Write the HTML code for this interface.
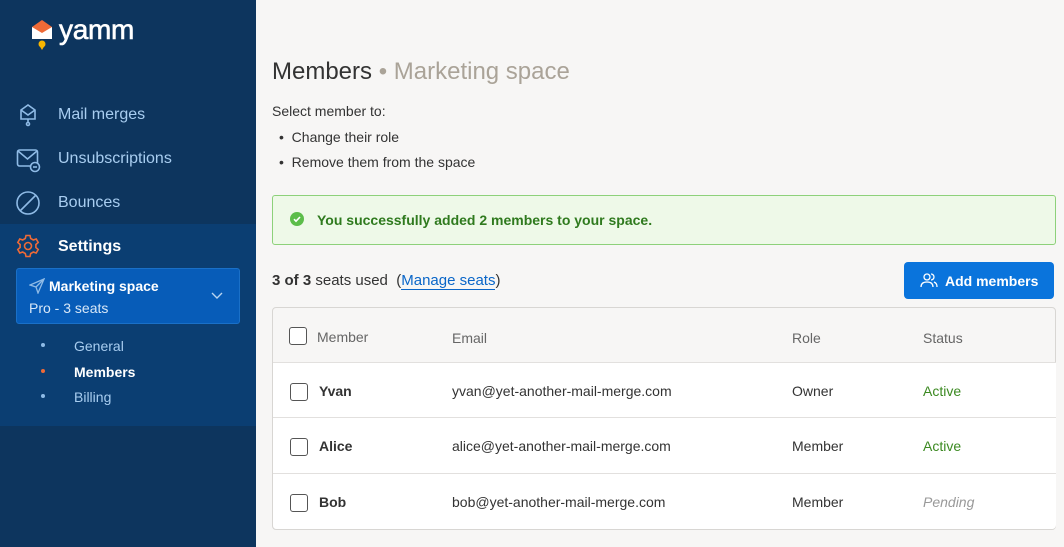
<!DOCTYPE html>
<html><head><style>
*{box-sizing:border-box;margin:0;padding:0}
body{width:1064px;height:547px;overflow:hidden;font-family:"Liberation Sans",sans-serif;background:#f7f6f5;position:relative}
.sb{position:absolute;left:0;top:0;width:256px;height:547px;background:#0d355e}
.sel{position:absolute;left:0;top:224px;width:256px;height:202px;background:#0b3e72}
.nav{position:absolute;left:58px;font-size:16px;color:#a8cdf0}
.ic{position:absolute;left:16px}
.t{position:absolute;font-size:14px;color:#333}
.row{position:absolute;left:273px;width:783px;height:56px;background:#fff;border-top:1px solid #e2e0de}
.cb{position:absolute;width:18px;height:18px;border:1.5px solid #555;border-radius:3px;background:#fff}
.row span{position:absolute;top:20px;font-size:14px;color:#333}
</style></head><body>
<div class="sb"></div>
<div class="sel"></div>
<svg style="position:absolute;left:31px;top:19px" width="22" height="32" viewBox="0 0 22 32"><path d="M1 8 L11 1 L21 8 Z" fill="#ee6a37"/><rect x="1" y="8" width="20" height="12" fill="#fff"/><path d="M1 8 L11 14 L21 8" fill="#ee6a37"/><circle cx="11" cy="25" r="3.5" fill="#f7b500"/><path d="M8 26 L11 31 L14 26Z" fill="#f7b500"/></svg>
<div style="position:absolute;left:59px;top:14px;font-size:28px;color:#fff;letter-spacing:-0.3px;-webkit-text-stroke:0.6px #fff">yamm</div>
<svg class="ic" style="top:102px" width="26" height="26" viewBox="0 0 26 26" fill="none" stroke="#8fbbe6" stroke-width="1.6"><path d="M5 8 L12 3 L19 8 V17 H5 Z"/><path d="M5 8 L12 13 L19 8"/><path d="M12 17v3"/><circle cx="12" cy="22" r="1.5"/></svg>
<div class="nav" style="top:106px">Mail merges</div>
<svg class="ic" style="top:147px" width="26" height="26" viewBox="0 0 26 26" fill="none" stroke="#8fbbe6" stroke-width="1.6"><rect x="1.5" y="3" width="20" height="16" rx="2"/><path d="M2 4 L11.5 12 L21 4"/><circle cx="19" cy="20" r="4.5" fill="#0d355e"/><path d="M17 20h4"/></svg>
<div class="nav" style="top:150px">Unsubscriptions</div>
<svg class="ic" style="top:191px" width="26" height="26" viewBox="0 0 26 26" fill="none" stroke="#8fbbe6" stroke-width="1.6"><circle cx="12" cy="12" r="11"/><path d="M4.5 19.5 L19.5 4.5"/></svg>
<div class="nav" style="top:194px">Bounces</div>
<svg class="ic" style="top:234px" width="24" height="24" viewBox="0 0 24 24" fill="none" stroke="#ee6a37" stroke-width="1.6"><circle cx="12" cy="12" r="3.5"/><path d="M10 1.5h4l.7 3 2.6 1.5 2.9-1 2 3.5-2.3 2v3l2.3 2-2 3.5-2.9-1-2.6 1.5-.7 3h-4l-.7-3-2.6-1.5-2.9 1-2-3.5 2.3-2v-3l-2.3-2 2-3.5 2.9 1 2.6-1.5z"/></svg>
<div class="nav" style="top:238px;color:#fff;font-weight:bold">Settings</div>
<div style="position:absolute;left:16px;top:268px;width:224px;height:56px;background:#075cb8;border:1px solid #1a70c8;border-radius:3px"></div>
<svg style="position:absolute;left:29px;top:278px" width="16" height="16" viewBox="0 0 16 16" fill="none" stroke="#8fbbe6" stroke-width="1.3"><path d="M15 1 L1 7 L7 9 L9 15 Z M15 1 L7 9"/></svg>
<div style="position:absolute;left:49px;top:278px;font-size:14px;font-weight:bold;color:#fff">Marketing space</div>
<div style="position:absolute;left:29px;top:300px;font-size:14px;color:#d8e8f8">Pro - 3 seats</div>
<svg style="position:absolute;left:211px;top:292px" width="12" height="8" viewBox="0 0 12 8" fill="none" stroke="#b8d4f0" stroke-width="1.4"><path d="M1 1l5 5 5-5"/></svg>
<div style="position:absolute;left:41px;top:343px;width:4px;height:4px;border-radius:2px;background:#8fbbe6"></div>
<div style="position:absolute;left:41px;top:369px;width:4px;height:4px;border-radius:2px;background:#ee6a37"></div>
<div style="position:absolute;left:41px;top:394px;width:4px;height:4px;border-radius:2px;background:#8fbbe6"></div>
<div style="position:absolute;left:74px;top:338px;font-size:14px;color:#a8cdf0">General</div>
<div style="position:absolute;left:74px;top:364px;font-size:14px;color:#fff;font-weight:bold">Members</div>
<div style="position:absolute;left:74px;top:389px;font-size:14px;color:#a8cdf0">Billing</div>

<div style="position:absolute;left:272px;top:58px;font-size:24px;color:#333">Members <span style="color:#aaa398">• Marketing space</span></div>
<div class="t" style="left:272px;top:103px">Select member to:</div>
<div class="t" style="left:279px;top:129px">•&nbsp;&nbsp;Change their role</div>
<div class="t" style="left:279px;top:154px">•&nbsp;&nbsp;Remove them from the space</div>
<div style="position:absolute;left:272px;top:195px;width:784px;height:50px;background:#eef9e8;border:1px solid #8dd17a;border-radius:3px"></div>
<div style="position:absolute;left:290px;top:212px;width:14px;height:14px;border-radius:7px;background:#5cbd4a"></div>
<svg style="position:absolute;left:290px;top:212px" width="14" height="14" viewBox="0 0 14 14" fill="none" stroke="#fff" stroke-width="1.6"><path d="M4 7.2l2 2 4-4.2"/></svg>
<div style="position:absolute;left:317px;top:212px;font-size:14px;font-weight:bold;color:#2f7a1e">You successfully added 2 members to your space.</div>
<div class="t" style="left:272px;top:272px;font-size:15px"><b>3 of 3</b> seats used&nbsp; (<span style="color:#0a66c8;border-bottom:1px solid #0a66c8">Manage seats</span>)</div>
<div style="position:absolute;left:904px;top:262px;width:150px;height:37px;background:#0a74dc;border-radius:4px"></div>
<svg style="position:absolute;left:920px;top:272px" width="18" height="16" viewBox="0 0 18 16" fill="none" stroke="#fff" stroke-width="1.3"><circle cx="7" cy="5" r="3"/><path d="M1 15c0-4 3-5 6-5s6 1 6 5"/><path d="M11 2a3 3 0 010 6M14 10c2 1 3 2 3 5"/></svg>
<div style="position:absolute;left:945px;top:273px;font-size:14px;font-weight:bold;color:#fff">Add members</div>
<div style="position:absolute;left:272px;top:307px;width:784px;height:223px;border:1px solid #d8d6d3;border-radius:4px;background:#f7f6f5"></div>
<div class="cb" style="left:289px;top:327px"></div>
<div class="t" style="left:317px;top:329px;color:#666">Member</div>
<div class="t" style="left:452px;top:330px;color:#666">Email</div>
<div class="t" style="left:792px;top:330px;color:#666">Role</div>
<div class="t" style="left:923px;top:330px;color:#666">Status</div>
<div class="row" style="top:362px"><div class="cb" style="left:17px;top:20px"></div><span style="left:46px;font-weight:bold">Yvan</span><span style="left:179px">yvan@yet-another-mail-merge.com</span><span style="left:519px">Owner</span><span style="left:650px;color:#3c8a22">Active</span></div>
<div class="row" style="top:417px"><div class="cb" style="left:17px;top:20px"></div><span style="left:46px;font-weight:bold">Alice</span><span style="left:179px">alice@yet-another-mail-merge.com</span><span style="left:519px">Member</span><span style="left:650px;color:#3c8a22">Active</span></div>
<div class="row" style="top:473px;height:56px;border-radius:0 0 4px 4px"><div class="cb" style="left:17px;top:20px"></div><span style="left:46px;font-weight:bold">Bob</span><span style="left:179px">bob@yet-another-mail-merge.com</span><span style="left:519px">Member</span><span style="left:650px;color:#999;font-style:italic">Pending</span></div>
</body></html>
